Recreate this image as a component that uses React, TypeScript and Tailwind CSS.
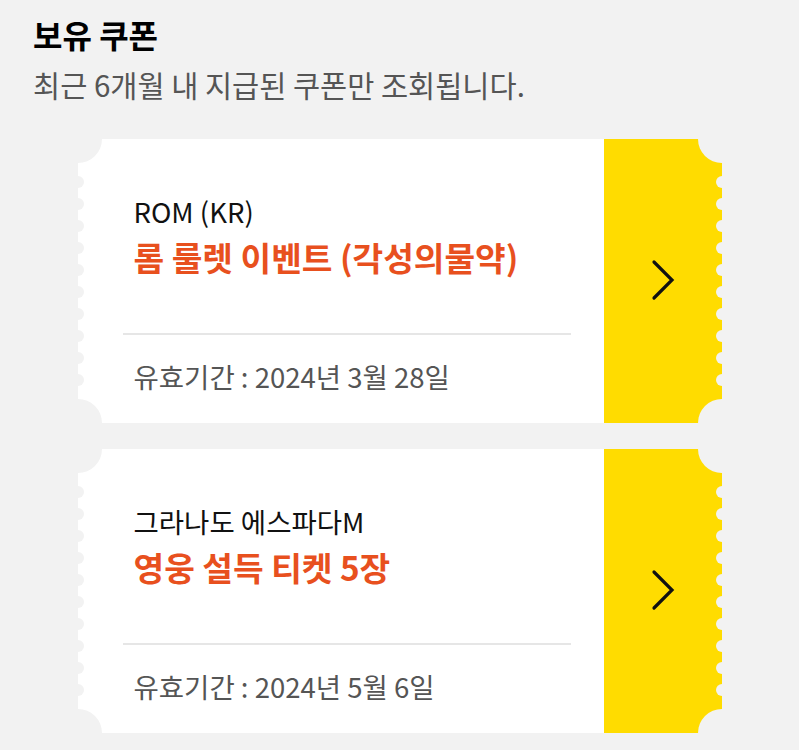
import React from "react";

type Coupon = { game: string; title: string; expiry: string };

const coupons: Coupon[] = [
  { game: "ROM (KR)", title: "롬 룰렛 이벤트 (각성의물약)", expiry: "2024년 3월 28일" },
  { game: "그라나도 에스파다M", title: "영웅 설득 티켓 5장", expiry: "2024년 5월 6일" },
];

const scallops = Array.from({ length: 10 }, (_, i) => 43 + i * 22);

function Ticket({ c }: { c: Coupon }) {
  return (
    <div className="relative flex h-[284px] w-[644px] overflow-hidden">
      <div className="flex flex-1 flex-col bg-white pl-[45px] pr-[33px]">
        <div className="flex flex-1 flex-col pl-[11px] pt-[54px]">
          <div className="text-[27.5px] leading-[36px] text-[#111]">{c.game}</div>
          <div className="mt-[8px] text-[33.3px] font-bold leading-[40px] text-[#e8501e]">{c.title}</div>
        </div>
        <div className="h-[2px] bg-[#e6e6e6]" />
        <div className="pl-[11px] pt-[23px] pb-[29px] text-[27.5px] leading-[36px] text-[#555]">
          유효기간 : {c.expiry}
        </div>
      </div>
      <div className="flex w-[118px] items-center justify-center bg-[#ffdc00]">
        <svg width="26" height="42" viewBox="0 0 26 42" className="-mt-[2px] ml-[1px]">
          <polyline points="4,3 22,21 4,39" fill="none" stroke="#111" strokeWidth="3.2" strokeLinecap="round" strokeLinejoin="miter" />
        </svg>
      </div>
      {/* corner notches */}
      <div className="absolute -left-[24px] -top-[24px] h-[48px] w-[48px] rounded-full bg-[#f2f2f2]" />
      <div className="absolute -right-[24px] -top-[24px] h-[48px] w-[48px] rounded-full bg-[#f2f2f2]" />
      <div className="absolute -bottom-[24px] -left-[24px] h-[48px] w-[48px] rounded-full bg-[#f2f2f2]" />
      <div className="absolute -bottom-[24px] -right-[24px] h-[48px] w-[48px] rounded-full bg-[#f2f2f2]" />
      {/* edge scallops */}
      {scallops.map((y) => (
        <React.Fragment key={y}>
          <div
            className="absolute -left-[6px] h-[12px] w-[12px] -translate-y-1/2 rounded-full bg-[#f2f2f2]"
            style={{ top: y }}
          />
          <div
            className="absolute -right-[6px] h-[12px] w-[12px] -translate-y-1/2 rounded-full bg-[#f2f2f2]"
            style={{ top: y }}
          />
        </React.Fragment>
      ))}
    </div>
  );
}

export default function App() {
  return (
    <div
      className="min-h-[750px] w-full bg-[#f2f2f2]"
      style={{ fontFamily: '"Noto Sans CJK KR", "Noto Sans", sans-serif' }}
    >
      <div className="px-[33px] pt-[14px]">
        <h1 className="text-[32px] font-bold leading-[40px] text-black">보유 쿠폰</h1>
        <p className="mt-[10px] text-[29.5px] leading-[40px] text-[#555]">최근 6개월 내 지급된 쿠폰만 조회됩니다.</p>
      </div>
      <div className="mt-[35px] flex flex-col items-center gap-[26px]">
        {coupons.map((c) => (
          <Ticket key={c.title} c={c} />
        ))}
      </div>
    </div>
  );
}
